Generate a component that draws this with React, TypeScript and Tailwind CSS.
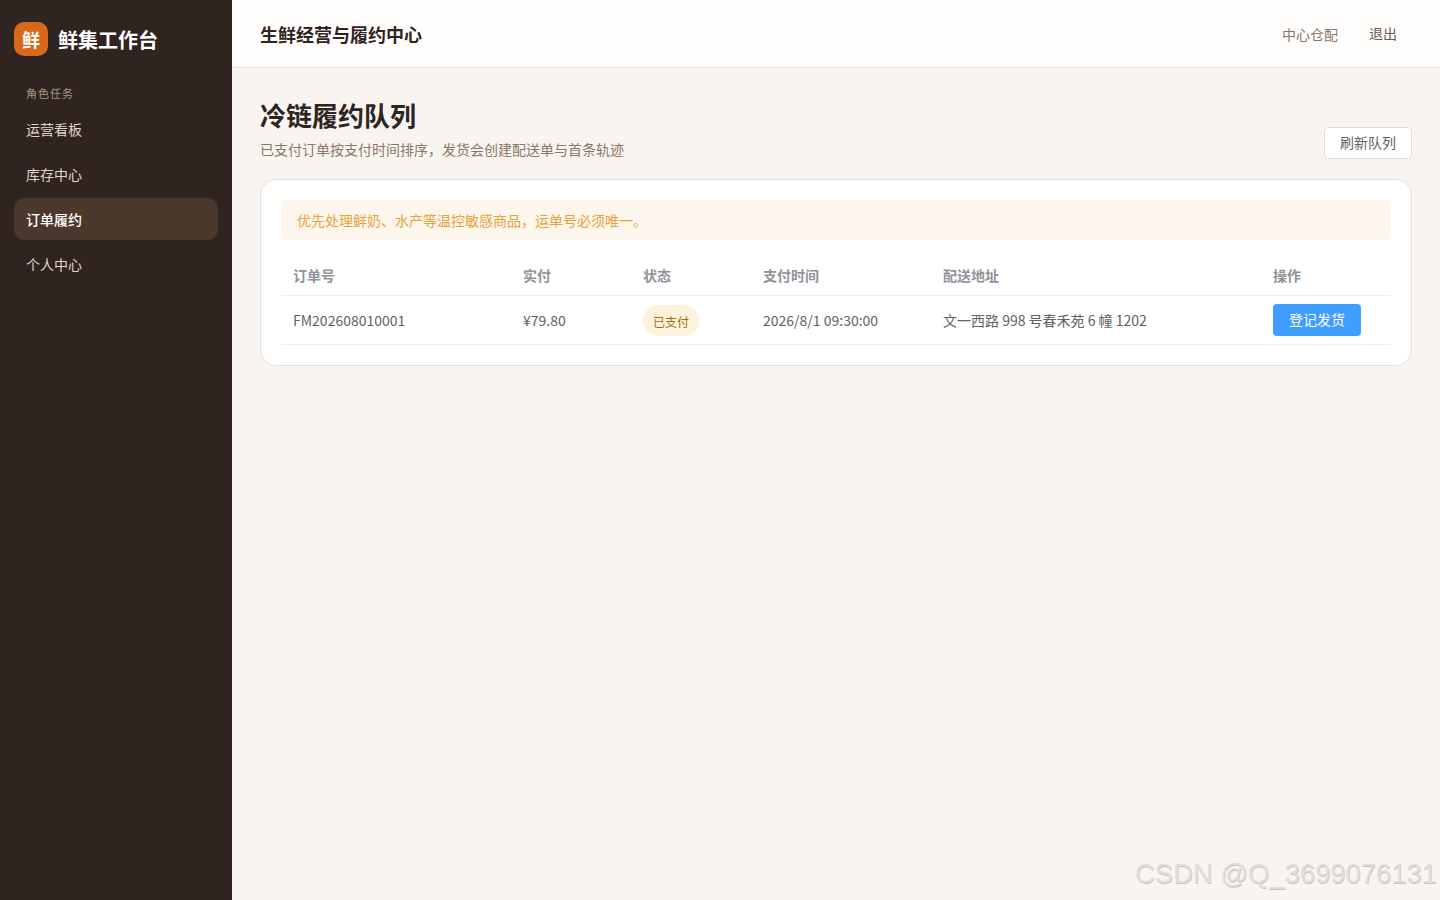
const navItems = [
  { label: '运营看板', active: false },
  { label: '库存中心', active: false },
  { label: '订单履约', active: true },
  { label: '个人中心', active: false },
];

const font = "font-['Noto_Sans_CJK_SC','Noto_Sans',sans-serif]";

function Sidebar() {
  return (
    <aside className="w-[232px] shrink-0 bg-[#2f241f] px-[14px] pt-[22px]">
      <div className="flex items-center gap-[10px]">
        <div className="flex h-[34px] w-[34px] items-center justify-center rounded-[10px] bg-[#d9681a] text-lg font-bold text-white">
          鲜
        </div>
        <span className="mt-[2px] text-xl font-bold text-white">鲜集工作台</span>
      </div>
      <div className="mt-[28px] px-3 text-[11px] leading-[18px] tracking-[1px] text-[#a8988a]">角色任务</div>
      <nav className="mt-[6px] flex flex-col gap-[3px]">
        {navItems.map((item) => (
          <div
            key={item.label}
            className={
              item.active
                ? 'flex h-[42px] items-center rounded-[10px] bg-[#4a382c] px-3 text-sm font-medium text-white'
                : 'flex h-[42px] items-center rounded-[10px] px-3 text-sm text-[#e0d5ca]'
            }
          >
            {item.label}
          </div>
        ))}
      </nav>
    </aside>
  );
}

function Header() {
  return (
    <header className="flex h-[68px] items-center justify-between border-b border-[#e8e0d8] bg-[#fffdfb] pl-7 pr-[43px]">
      <h1 className="text-lg font-bold text-[#2f241f]">生鲜经营与履约中心</h1>
      <div className="flex items-center gap-[31px] text-sm">
        <span className="text-[#8a7668]">中心仓配</span>
        <span className="mb-[2px] text-[#6b5a4e]">退出</span>
      </div>
    </header>
  );
}

function OrderTable() {
  return (
    <table className="mt-[15px] w-full table-fixed border-collapse text-sm">
      <colgroup>
        <col className="w-[230px]" />
        <col className="w-[120px]" />
        <col className="w-[120px]" />
        <col className="w-[180px]" />
        <col className="w-[330px]" />
        <col className="w-[130px]" />
      </colgroup>
      <thead>
        <tr className="h-10 border-b border-[#ebeef5] text-left font-bold text-[#909399]">
          <th className="px-3 font-bold">订单号</th>
          <th className="px-3 font-bold">实付</th>
          <th className="px-3 font-bold">状态</th>
          <th className="px-3 font-bold">支付时间</th>
          <th className="px-3 font-bold">配送地址</th>
          <th className="px-3 font-bold">操作</th>
        </tr>
      </thead>
      <tbody>
        <tr className="h-[49px] border-b border-[#ebeef5] text-[#606266]">
          <td className="px-3">FM202608010001</td>
          <td className="px-3">¥79.80</td>
          <td className="px-3">
            <span className="mt-[2px] inline-flex h-[31px] w-14 items-center justify-center rounded-full bg-[#fdf3dc] pt-[2px] text-xs text-[#a8690f]">
              已支付
            </span>
          </td>
          <td className="px-3">2026/8/1 09:30:00</td>
          <td className="px-3">文一西路 998 号春禾苑 6 幢 1202</td>
          <td className="px-3">
            <button className="block h-8 w-[88px] rounded bg-[#409eff] pb-[2px] text-sm text-white">登记发货</button>
          </td>
        </tr>
      </tbody>
    </table>
  );
}

export default function App() {
  return (
    <div className={`relative flex h-[900px] w-[1440px] overflow-hidden bg-[#f8f5f0] ${font}`}>
      <Sidebar />
      <div className="flex-1">
        <Header />
        <main className="px-7 pt-[29px]">
          <div className="flex items-end justify-between">
            <div>
              <h2 className="text-[26px] leading-9 font-bold text-[#2f241f]">冷链履约队列</h2>
              <p className="mt-[6px] text-sm leading-5 text-[#8a7668]">已支付订单按支付时间排序，发货会创建配送单与首条轨迹</p>
            </div>
            <button className="h-8 w-[88px] rounded border border-[#dcdfe6] bg-white pb-[2px] text-sm text-[#606266]">
              刷新队列
            </button>
          </div>
          <section className="mt-5 rounded-2xl border border-[#e8e0d8] bg-white p-5">
            <div className="flex h-10 items-center rounded bg-[#fdf6ec] px-4 text-sm text-[#e6a23c]">
              优先处理鲜奶、水产等温控敏感商品，运单号必须唯一。
            </div>
            <OrderTable />
          </section>
        </main>
      </div>
      <div className="absolute right-[3px] bottom-[10px] font-['Liberation_Sans',sans-serif] text-[27.4px] leading-8 text-[#e0dedb] [text-shadow:0.5px_0.5px_0.5px_#c4c2be]">
        CSDN @Q_3699076131
      </div>
    </div>
  );
}
